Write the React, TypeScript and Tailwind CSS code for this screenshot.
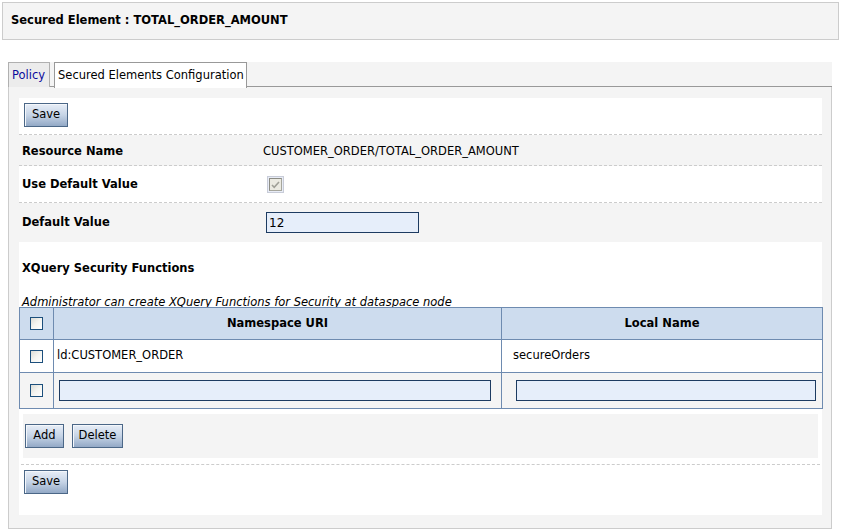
import React from "react";

const Btn = ({ label, w }: { label: string; w: string }) => (
  <button
    className={`${w} h-[24px] border border-[#4b6787] bg-gradient-to-b from-[#e8eef7] via-[#c6d4e6] to-[#93a9c6] text-[11.5px] text-black leading-none shadow-[inset_1px_1px_0_#f4f7fb]`}
  >
    {label}
  </button>
);

const Cb = () => (
  <span className="inline-block w-[13px] h-[13px] border border-[#1c4f7c] bg-gradient-to-br from-[#dcdcd6] via-[#f4f4f0] to-[#ffffff]" />
);

export default function App() {
  return (
    <div
      className="w-[841px] h-[532px] bg-white text-black text-[11.5px] overflow-hidden"
      style={{ fontFamily: '"DejaVu Sans", Verdana, sans-serif' }}
    >
      <div className="pt-[2px] pl-[2px]">
        <div className="w-[837px] h-[38px] border border-[#cccccc] bg-[#f4f4f4] flex items-center pl-[8px] font-bold text-[11.5px]">
          Secured Element : TOTAL_ORDER_AMOUNT
        </div>
      </div>

      <div className="ml-[8px] mt-[22px] w-[824px]">
        {/* tab strip */}
        <div className="h-[25px] bg-[#f4f4f4] flex items-stretch relative">
          <div className="w-[42px] border-l border-t border-r border-[#b0b0b0] bg-[#ececec] flex items-center pl-[3px] pt-[1px] text-[#0c0c9c]">
            Policy
          </div>
          <div className="w-[4px] border-b border-[#999999]" />
          <div className="w-[193px] border-l border-t border-r border-[#999999] bg-white flex items-center pl-[3px] pt-[1px] relative z-10 h-[26px]">
            Secured Elements Configuration
          </div>
          <div className="flex-1 border-b border-[#999999]" />
        </div>

        {/* panel */}
        <div className="h-[442px] border-l border-r border-b border-[#cccccc] bg-[#f4f4f4] pt-[11px] pl-[10px] pr-[9px] pb-[13px]">
          <div className="bg-white h-full flex flex-col">
            <div className="h-[37px] pl-[5px] pt-[5px] border-b border-dashed border-[#cccccc]">
              <Btn label="Save" w="w-[44px]" />
            </div>

            <div className="h-[31px] bg-[#f4f4f4] border-b border-dashed border-[#cccccc] flex items-center pt-[4px]">
              <div className="w-[244px] pl-[3px] font-bold">Resource Name</div>
              <div>CUSTOMER_ORDER/TOTAL_ORDER_AMOUNT</div>
            </div>

            <div className="h-[37px] bg-white border-b border-dashed border-[#cccccc] flex items-center pt-[1px]">
              <div className="w-[244px] pl-[3px] font-bold">Use Default Value</div>
              <div className="ml-[4px] w-[17px] h-[17px] border border-[#c8ccd8] bg-[#e8ecf6] flex items-center justify-center">
                <span className="w-[13px] h-[13px] border border-[#a6a69c] bg-[#ebeae2] flex items-center justify-center border-t-[#8c8c84] border-l-[#8c8c84]">
                  <svg width="9" height="8" viewBox="0 0 9 8">
                    <path d="M1 4 L3.2 6.3 L8 1" fill="none" stroke="#a0a098" strokeWidth="1.6" />
                  </svg>
                </span>
              </div>
            </div>

            <div className="h-[39px] bg-[#f4f4f4] flex items-center">
              <div className="w-[244px] pl-[3px] font-bold">Default Value</div>
              <div className="ml-[3px] w-[153px] h-[21px] border border-[#1d3b61] bg-[#e6eefa] flex items-center pl-[2px] text-[12px]">
                12
              </div>
            </div>

            <div className="h-[65px] flex flex-col pl-[3px]">
              <div className="mt-[18px] font-bold">XQuery Security Functions</div>
              <div className="mt-[17px] italic">
                Administrator can create XQuery Functions for Security at dataspace node
              </div>
            </div>

            <table className="border-collapse w-[803px] table-fixed">
              <colgroup>
                <col className="w-[34px]" />
                <col className="w-[448px]" />
                <col className="w-[321px]" />
              </colgroup>
              <tbody>
                <tr className="h-[32px] bg-[#cddcee]">
                  <td className="border border-[#6e8bb0] text-center align-middle">
                    <div className="flex justify-center"><Cb /></div>
                  </td>
                  <td className="border border-[#6e8bb0] text-center font-bold">Namespace URI</td>
                  <td className="border border-[#6e8bb0] text-center font-bold">Local Name</td>
                </tr>
                <tr className="h-[33px] bg-white">
                  <td className="border border-[#6e8bb0]">
                    <div className="flex justify-center"><Cb /></div>
                  </td>
                  <td className="border border-[#6e8bb0] pl-[3px]">ld:CUSTOMER_ORDER</td>
                  <td className="border border-[#6e8bb0] pl-[11px]">secureOrders</td>
                </tr>
                <tr className="h-[36px] bg-[#f4f4f4]">
                  <td className="border border-[#6e8bb0]">
                    <div className="flex justify-center"><Cb /></div>
                  </td>
                  <td className="border border-[#6e8bb0] pl-[5px] pr-[10px]">
                    <div className="h-[21px] border border-[#1d3b61] bg-[#e6eefa]" />
                  </td>
                  <td className="border border-[#6e8bb0] pl-[14px] pr-[6px]">
                    <div className="h-[21px] border border-[#1d3b61] bg-[#e6eefa]" />
                  </td>
                </tr>
              </tbody>
            </table>

            <div className="mt-[5px] ml-[4px] mr-[4px] h-[44px] bg-[#f4f4f4] flex items-center gap-[8px] pl-[2px]">
              <Btn label="Add" w="w-[39px]" />
              <Btn label="Delete" w="w-[51px]" />
            </div>

            <div className="mt-[6px] mx-[2px] border-b border-dashed border-[#cccccc]" />
            <div className="pl-[5px] pt-[5px]">
              <Btn label="Save" w="w-[44px]" />
            </div>
          </div>
        </div>
      </div>
    </div>
  );
}
